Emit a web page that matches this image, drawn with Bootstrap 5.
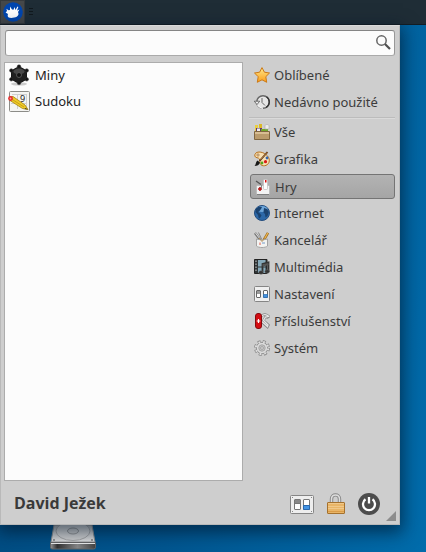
<!DOCTYPE html>
<html lang="cs">
<head>
<meta charset="utf-8">
<meta name="viewport" content="width=device-width, initial-scale=1">
<title>Nabídka aplikací</title>
<link href="https://cdn.jsdelivr.net/npm/bootstrap@5.3.0/dist/css/bootstrap.min.css" rel="stylesheet">
<style>
body{font:13px/20px "Noto Sans","Open Sans",sans-serif;color:#3c3c3c;background:linear-gradient(100deg,#00497d 0%,#005690 50%,#006cab 100%)}
svg{display:block;flex:none}
.top-panel{height:25px;background:#1f2d36;border-bottom:1px solid #141d23}
.menu-toggle{width:25px;height:24px;background:#45484a;border:1px solid #35393c}
.handle{width:4px;height:8px;background:repeating-linear-gradient(#11191e 0 1px,#1f2d36 1px 3px)}
.whisker{margin-right:26px;padding:4px 4px 0 3px;background:#cecece;border:1px solid #b9b9b9;border-top-color:#d9d9d9;box-shadow:0 5px 16px 3px rgba(0,20,40,.6);z-index:1}
.search-box{height:26px;padding:0 3px 2px;background:#fcfcfc;border:1px solid #8e8e8e;border-color:#858585 #989898 #aaa;border-radius:3px;margin-left:1px}
.search-box input{font-size:13px}
.panes{margin-top:6px}
.apps{background:#fcfcfc;border:1px solid #acacac}
.app-row{height:26px;padding:0 4px 2px 3px;gap:5px;color:#1e1e1e}
.app-row,.cat{background:none;border:0;text-align:left}
.cats{width:145px;margin-left:7px;padding-top:1px}
.cat{height:25px;margin-bottom:2px;padding:0 3px 2px;gap:4px;color:#3c3c3c;border:1px solid transparent;border-radius:3px}
.cat.active{background:linear-gradient(#b3b3b3,#a5a5a5);border-color:#747474;padding:0 4px}
.rule{height:2px;margin:0 0 1px -1px;background:#bcbcbc;border-bottom:1px solid #dadada}
.foot{height:43px;padding-left:10px}
.user{font-family:"Open Sans","Noto Sans",sans-serif;font-size:16px;line-height:22px;color:#3a3a3a}
.tools{gap:10px;margin:2px 15px 0 0}
.tools button{background:none;border:0;padding:0}
.grip{right:3px;bottom:3px}
.desk{height:27px;padding-left:49px}
</style>
<script src="https://cdn.jsdelivr.net/npm/bootstrap@5.3.0/dist/js/bootstrap.bundle.min.js"></script>
</head>
<body class="d-flex flex-column min-vh-100">
<header class="top-panel d-flex align-items-center">
  <button class="menu-toggle p-0 d-flex align-items-center justify-content-center" aria-label="Nabídka">
    <svg width="20" height="20" viewBox="0 0 20 20"><circle cx="10" cy="10" r="9.8" fill="#0046af"/><path fill="#fff" d="M2.600 10.500 4 9 3.400 6.800 5.500 8.200 7 8 7 4.500 9 7.500l1.500.2L11.500 5l1 3 2-3.500.8.500-1.300 3.500 2.500-1-1.500 2.500c1 2 .5 3.700-1.300 4.800-2.200 1.200-6.500 1.500-8 .7-1.200-.6-1.200-2.500-.7-3.500z"/></svg>
  </button>
  <span class="handle ms-1"></span>
</header>

<main class="whisker flex-grow-1 d-flex flex-column position-relative">
  <div class="search-box d-flex align-items-center">
    <input type="text" class="border-0 bg-transparent flex-grow-1 p-0" aria-label="Hledat">
    <svg width="16" height="16" viewBox="0 0 16 16" fill="none"><circle cx="6.500" cy="6.500" r="4.700" stroke="#666" stroke-width="1.500"/><path d="m10 10 5 5" stroke="#505050" stroke-width="2.200"/></svg>
  </div>

  <div class="panes flex-grow-1 d-flex">
    <section class="apps flex-grow-1 d-flex flex-column">
      <button class="app-row d-flex align-items-center">
        <svg width="22" height="22" viewBox="0 0 22 22"><ellipse cx="11" cy="20" rx="8" ry="1.600" fill="#ccc"/><path d="m11 2 8 4.500v9L11 20l-8-4.500v-9z" fill="#161616"/><g fill="#151515" stroke="#444" stroke-width=".5"><circle cx="11" cy="2.600" r="1.800"/><circle cx="3.300" cy="6.500" r="1.800"/><circle cx="18.700" cy="6.500" r="1.800"/><circle cx="3.300" cy="15.300" r="1.800"/><circle cx="18.700" cy="15.300" r="1.800"/><circle cx="11" cy="19" r="1.800"/></g><circle cx="11" cy="11" r="7.500" fill="#202020"/><ellipse cx="11" cy="7.500" rx="5.500" ry="3" fill="#484848"/><circle cx="11" cy="11" r="2.500" fill="#111" stroke="#555"/></svg>
        <span>Miny</span>
      </button>
      <button class="app-row d-flex align-items-center">
        <svg width="22" height="22" viewBox="0 0 22 22"><rect x="1.500" y="1.500" width="20" height="20" rx="1" fill="#f4f4f2" stroke="#8c8c88"/><path d="M9.500 4v15M3 13.500h16M18.500 4v15M4 4.500h15" stroke="#cfcfcf"/><text x="12" y="11.500" font-size="9" fill="#222">9</text><path d="m2.500 6.800 2.500-.3 12 8.500 3 4.500-5.500-1L2 10.500z" fill="#efcb27" stroke="#a3810e" stroke-width=".8"/><path d="m3.500 9 12.500 8" stroke="#c99f13"/><path d="m17.500 18 2.500 1.600-3.500-.5z" fill="#333"/><circle cx="2.500" cy="8.500" r="2.400" fill="#e32d2d"/><circle cx="2.500" cy="8.500" r=".9" fill="#ff9e95"/></svg>
        <span>Sudoku</span>
      </button>
    </section>

    <nav class="cats d-flex flex-column" aria-label="Kategorie">
      <button class="cat d-flex align-items-center">
        <svg width="16" height="16" viewBox="0 0 16 16"><defs><linearGradient id="gold" x2="0" y2="1"><stop stop-color="#ffe98c"/><stop offset="1" stop-color="#fb9d18"/></linearGradient></defs><path d="m8 .6 2.400 4.600 5.100.8-3.700 3.700.9 5.600L8 12.800l-4.700 2.500.9-5.600L.5 6l5.100-.8z" fill="url(#gold)" stroke="#cb7a17" stroke-linejoin="round"/></svg>
        <span>Oblíbené</span>
      </button>
      <button class="cat d-flex align-items-center">
        <svg width="16" height="16" viewBox="0 0 16 16" fill="none"><circle cx="9" cy="8" r="6.300" fill="#e5e5e5" stroke="#666" stroke-width="1.500"/><path d="M12.500 2.800A6.300 6.300 0 0 1 12 13.500" stroke="#333" stroke-width="1.300"/><path d="M9 14.300A6.500 6.500 0 0 1 3 8" stroke="#f4f4f4" stroke-width="1.500"/><path d="M.3 7.200h5.400L3 10.600z" fill="#eee" stroke="#555" stroke-width=".8"/><path d="M8 4v4.500l3 3" stroke="#666"/></svg>
        <span>Nedávno použité</span>
      </button>
      <div class="rule"></div>
      <button class="cat d-flex align-items-center">
        <svg width="16" height="16" viewBox="0 0 16 16"><path d="M1 1h3v6H1z" fill="#e9cf3f"/><path d="M5 0h3v5H5z" fill="#dcb927"/><path d="M2 4h6v3H2z" fill="#65366c"/><path d="M3 4.500h3V7H3z" fill="#eee"/><path d="M7 5h7v3H7z" fill="#72a82c"/><path d="M11 2c0-2 4-2 4 0v3h-4z" fill="#ececec" stroke="#aaa" stroke-width=".6"/><path d="M.5 7.500h15v8H.5z" fill="#ba9b6c" stroke="#806640"/><path d="M1 8h14v2H1z" fill="#d8be93"/></svg>
        <span>Vše</span>
      </button>
      <button class="cat d-flex align-items-center">
        <svg width="16" height="16" viewBox="0 0 16 16"><path d="M5 1C2 1 .5 3 .8 5c.5 2.300 3.700 1.200 4.700 3 .8 1.600-.5 3.800 1.500 5.800 2.600 2.200 8 .6 8.300-4C15.600 5 10 1 5 1z" fill="#f8e0b4" stroke="#b8721d"/><circle cx="4" cy="4" r="1.200" fill="#cecece" stroke="#a96516" stroke-width=".6"/><circle cx="13" cy="7" r="1.400" fill="#3267b5"/><circle cx="11.500" cy="10.700" r="1.600" fill="#d91818"/><circle cx="8" cy="12" r="1.400" fill="#55a51c"/><path d="m13.500 1-8 9" stroke="#5b3718" stroke-width="1.800"/><path d="m13 1.500-6.500 7" stroke="#c68d4b" stroke-width=".8"/><path d="M3.500 9.500 6 11.500C5.500 14 3 15 .5 15c1.500-1 1-4 3-5.500z" fill="#171717"/></svg>
        <span>Grafika</span>
      </button>
      <button class="cat active d-flex align-items-center" aria-current="true">
        <svg width="16" height="16" viewBox="0 0 16 16"><path d="m1 2 5 3.500" stroke="#555" stroke-width="1.300"/><rect x="1.500" y="6.500" width="13" height="9" rx="1" fill="#f3f3f3" stroke="#b5b5b5" stroke-width=".7"/><path d="M2 15.500h12" stroke="#808080"/><rect x="8.500" y=".5" width="4" height="10" rx="1" fill="#fcfcfc" stroke="#bbb" stroke-width=".7"/><path d="M10 1h1.500v2.500H10z" fill="#d11"/><path d="M5 8v4M3 10h4" stroke="#b41616" stroke-width="1.600"/><path d="M6.500 6v3" stroke="#888"/></svg>
        <span>Hry</span>
      </button>
      <button class="cat d-flex align-items-center">
        <svg width="16" height="16" viewBox="0 0 16 16"><circle cx="8" cy="8" r="7.500" fill="#2c68a8" stroke="#244d7e"/><ellipse cx="8" cy="4" rx="5.500" ry="3" fill="#6da5d8"/><path d="M2 3.500 5 1.500l3 .5-1 2L5.500 6 4 7l2 1.500 1.500 2L6 13l-1.200.6L4 10 1.500 7zM10 3l3 1 1.800 3-1.300 4-2 1.500L11 9 9.500 7.500l.2-2z" fill="#1b4370"/></svg>
        <span>Internet</span>
      </button>
      <button class="cat d-flex align-items-center">
        <svg width="16" height="16" viewBox="0 0 16 16"><path d="m1 1 6 8" stroke="#777" stroke-width="2.500"/><path d="m1.500 1 6 8" stroke="#ddd"/><path d="M4.500.5 8 8" stroke="#888"/><path d="M14 .8 9.500 8.500" stroke="#9b6a20" stroke-width="2.500"/><path d="m13.800 1-4 7" stroke="#f0b950" stroke-width="1.200"/><path d="M2.500 7c3 1 8 1 11 0v7c-2 2-9 2-11 0z" fill="#f3f3f1" stroke="#a3a3a3"/><path d="m5 6 3 3.500L11 6" fill="none" stroke="#b08b51"/><path d="M5 10.500h2v2.500H5z" fill="#e9a79e"/><path d="M8 10h3v2H8z" fill="#b4c7dc"/></svg>
        <span>Kancelář</span>
      </button>
      <button class="cat d-flex align-items-center">
        <svg width="16" height="16" viewBox="0 0 16 16"><path d="M.5.500h12.500v14H.5z" fill="#303638" stroke="#222"/><path d="M4 1h7.500v6.500H4zM4 8.500h7.500V14H4z" fill="#86a9ba"/><path d="M2 1.500v12" stroke="#ccc" stroke-dasharray="1.500 1.500"/><path d="M8.500 13V5l6-1.500v9" fill="none" stroke="#333" stroke-width="1.800"/><path d="m8.500 6.500 6-1.500" stroke="#555" stroke-width="2"/><ellipse cx="7" cy="13.500" rx="2.300" ry="1.800" fill="#333" stroke="#666" stroke-width=".5"/><ellipse cx="13.200" cy="12.500" rx="2.300" ry="1.800" fill="#333" stroke="#666" stroke-width=".5"/></svg>
        <span>Multimédia</span>
      </button>
      <button class="cat d-flex align-items-center">
        <svg width="16" height="16" viewBox="0 0 16 16"><rect x=".5" y=".5" width="15" height="15" rx="1" fill="#efefef" stroke="#858585"/><rect x="2.500" y="4.500" width="4" height="7" rx=".5" fill="#fff" stroke="#666"/><path d="M3 5h3v3H3z" fill="#999"/><rect x="9.500" y="4.500" width="4" height="7" rx=".5" fill="#fff" stroke="#666"/><path d="M9.500 8.500h4v3h-4z" fill="#4592df" stroke="#286db5" stroke-width=".7"/></svg>
        <span>Nastavení</span>
      </button>
      <button class="cat d-flex align-items-center">
        <svg width="16" height="16" viewBox="0 0 16 16" fill="none"><path d="M7.500 3c2-2 5-2 7.500.500l-1.500 1-2-.5-2 3.500 5 4.500-1 2-5-4.500" stroke="#858585" stroke-width="2.400"/><path d="M7.500 3c2-2 5-2 7 .3l-3 .7-2 3.500 4.500 4.500-.5 1.500-5-4.500" stroke="#e6e6e6" stroke-width="1.300"/><rect x="1.500" y=".5" width="6" height="15" rx="2.500" fill="#d40c12" stroke="#850a0e"/><path d="M4.500 6v4M2.700 8h3.600" stroke="#fff" stroke-width="1.200"/></svg>
        <span>Příslušenství</span>
      </button>
      <button class="cat d-flex align-items-center">
        <svg width="16" height="16" viewBox="0 0 16 16" fill="none"><circle cx="8" cy="8" r="6.500" stroke="#8c8c8c" stroke-width="3" stroke-dasharray="2.900 2.205"/><circle cx="8" cy="8" r="5.700" fill="#dcdcdc" stroke="#929292"/><circle cx="8" cy="8" r="6.200" stroke="#dedede" stroke-width="2" stroke-dasharray="1.700 3.170" stroke-dashoffset="-.5"/><circle cx="8" cy="8" r="3.200" fill="#c4c4c4" stroke="#a6a6a6"/><circle cx="8" cy="8" r="1.500" fill="#cecece" stroke="#999" stroke-width=".7"/></svg>
        <span>Systém</span>
      </button>
    </nav>
  </div>

  <footer class="foot d-flex align-items-center justify-content-between">
    <strong class="user">David Ježek</strong>
    <div class="tools d-flex align-items-center">
      <button aria-label="Nastavení"><svg width="24" height="24" viewBox="0 0 24 24"><rect x=".5" y="3.500" width="23" height="18" rx="1" fill="#eee" stroke="#858585"/><path d="M2 5.500h1M21 5.500h1M2 19.500h1M21 19.500h1" stroke="#888"/><rect x="4.500" y="7.500" width="6" height="10" rx=".5" fill="#fff" stroke="#777"/><path d="M5 8h5v3H5z" fill="#888"/><path d="M4.500 11.500h6" stroke="#777"/><rect x="13.500" y="7.500" width="6" height="10" rx=".5" fill="#fff" stroke="#777"/><path d="M13.500 13.500h6v4h-6z" fill="#4494e4" stroke="#2968ad"/></svg></button>
      <button aria-label="Zamknout"><svg width="24" height="24" viewBox="0 0 24 24"><path d="M7.500 11V7c0-5.500 8-5.500 8 0v4" fill="none" stroke="#868686" stroke-width="3.400"/><path d="M7.500 11V7c0-5.500 8-5.500 8 0v4" fill="none" stroke="#ddd" stroke-width="1.500"/><rect x="3.500" y="10.500" width="17" height="11" rx=".5" fill="#e9b567" stroke="#a5712d"/><path d="M4 11.500h16M4 14.500h16M4 16.500h16" stroke="#f0c88a"/><path d="M4 19.500h16" stroke="#d99b47"/></svg></button>
      <button aria-label="Vypnout"><svg width="22" height="22" viewBox="0 0 22 22" fill="none"><circle cx="11" cy="11" r="11" fill="#4c4c4c"/><path d="M7.500 6.300a6 6 0 1 0 7 0M11 4v6.500" stroke="#fff" stroke-width="2.300"/></svg></button>
    </div>
  </footer>
  <svg class="grip position-absolute" width="10" height="10" viewBox="0 0 10 10"><path d="M10 0v10H0z" fill="#8d8d8d"/></svg>
</main>

<div class="desk">
  <svg width="48" height="25" viewBox="0 0 48 25"><defs><linearGradient id="face" x2="0" y2="1"><stop stop-color="#bcbcbc"/><stop offset="1" stop-color="#e2e2e2"/></linearGradient><linearGradient id="edge"><stop stop-color="#999"/><stop offset=".15" stop-color="#333"/><stop offset=".6" stop-color="#888"/><stop offset="1" stop-color="#444"/></linearGradient></defs><path d="M5 0h38l3 17H2z" fill="url(#face)" stroke="#929292"/><ellipse cx="24" cy="6" rx="17" ry="9.500" fill="#d4d4d4" stroke="#aaa"/><ellipse cx="24" cy="6" rx="5.500" ry="3" fill="#ccc" stroke="#999"/><path d="M1.500 17.500h45v5q0 1.500-2 1.500h-41q-2 0-2-1.500z" fill="url(#edge)" stroke="#666"/><path d="M2 18.500h44" stroke="#eee"/><circle cx="5" cy="15" r=".9" fill="#777"/><circle cx="43" cy="15" r=".9" fill="#777"/></svg>
</div>
</body>
</html>
